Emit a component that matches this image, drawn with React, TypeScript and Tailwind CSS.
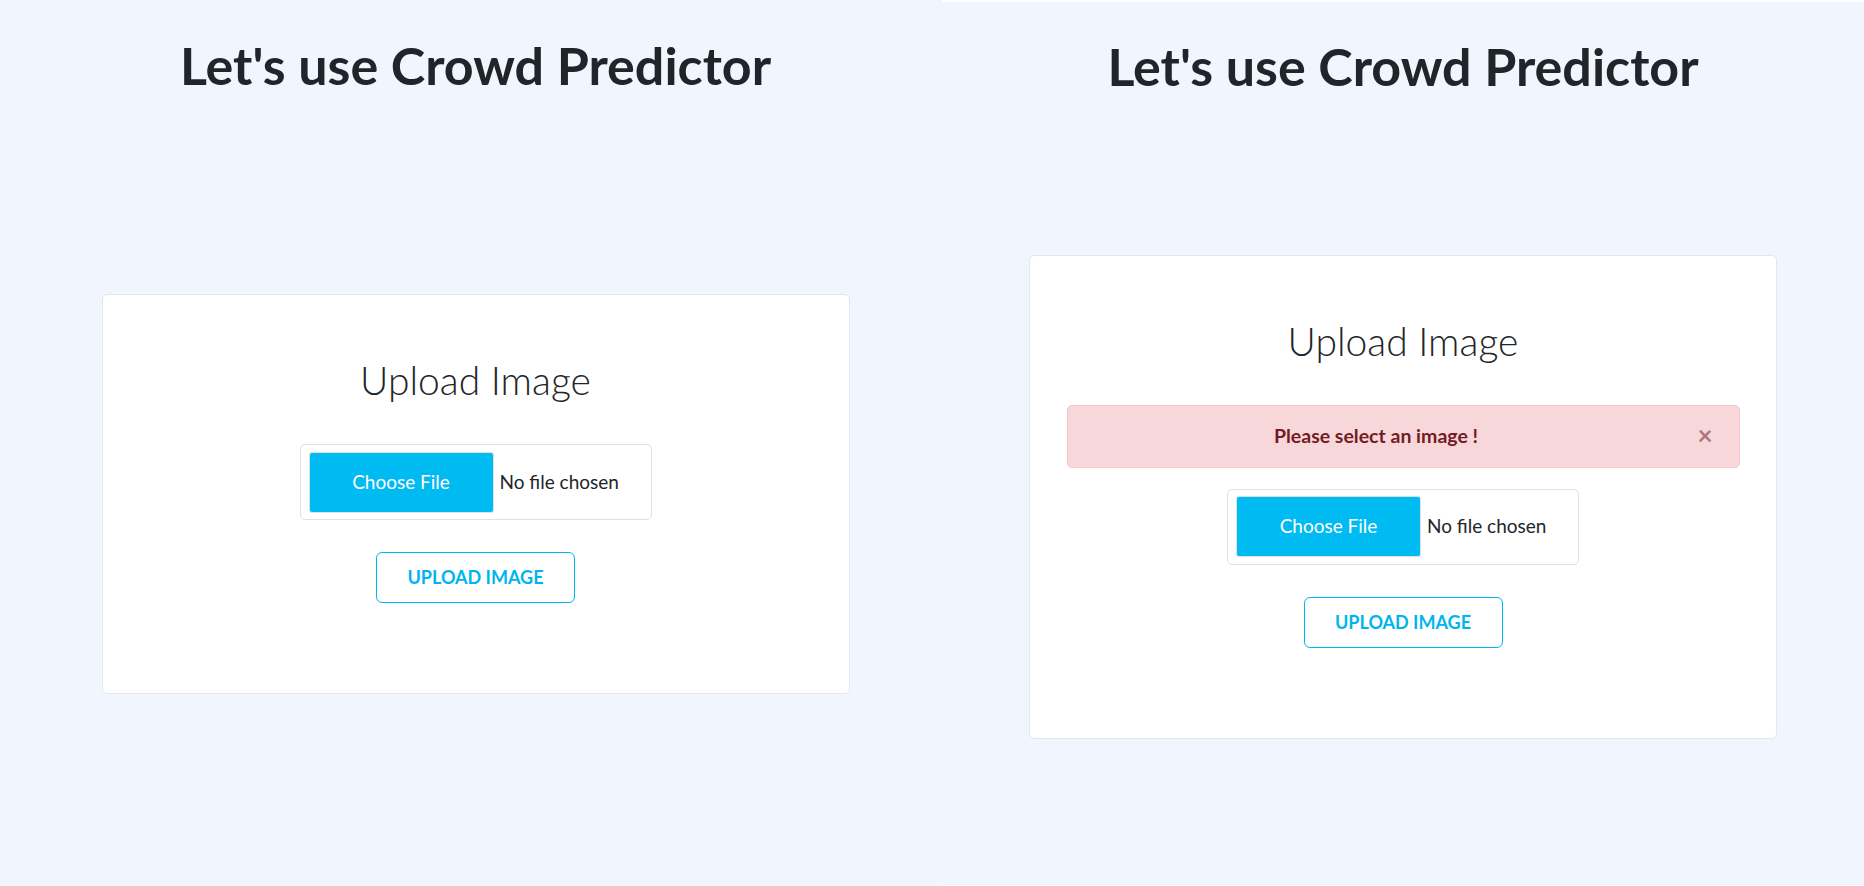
import React from "react";

const FileInput: React.FC = () => {
    return (
        <div className="w-[352px] h-[76px] border border-[#dee2e6] rounded-[5px] px-[8px] flex items-center">
            <div className="w-[185px] h-[61px] bg-[#00baf2] border border-[#d9e2e8] rounded-[3px] flex items-center justify-center text-white text-[19px]">
                Choose File
            </div>
            <span className="ml-[6px] text-[19px] text-[#212529]">
                No file chosen
            </span>
        </div>
    );
};

const Alert: React.FC = () => {
    return (
        <div className="relative w-[673px] h-[63px] mt-[40px] mb-[21px] bg-[#f8d7da] border border-[#f5c6cb] rounded-[5px] pl-5 pr-[74px] flex items-center justify-center text-[#721c24] font-bold text-[19.5px]">
            Please select an image !
            <span className="absolute right-[26px] top-[14px] text-[26px] leading-[30px] font-bold text-[#a8797e]">
                ×
            </span>
        </div>
    );
};

const Panel: React.FC<{ withAlert?: boolean }> = ({ withAlert }) => {
    return (
        <div
            className={`h-full flex flex-col items-center ${
                withAlert ? "flex-1 pl-[3px]" : "w-[939px] pl-[12px]"
            }`}
        >
            {withAlert && <div className="w-full h-[2px] bg-white shrink-0" />}
            <h1
                className={`${
                    withAlert ? "pt-[33px] mb-[11px]" : "pt-[34px] mb-[6px]"
                } text-[52px] leading-[62px] font-bold text-[#212529]`}
            >
                Let's use Crowd Predictor
            </h1>
            <div className="flex-1 w-full flex items-center justify-center">
                <div className="w-[748px] bg-white border border-[#e3e6ea] rounded-[5px] flex flex-col items-center pt-[61px] pb-[90px]">
                    <h2 className="text-[39px] leading-[48px] font-light text-[#212529]">
                        Upload Image
                    </h2>
                    {withAlert ? <Alert /> : <div className="h-[40px]" />}
                    <FileInput />
                    <button className="mt-[32px] w-[199px] h-[51px] border border-[#00b8f0] rounded-[6px] text-[#00b5ef] font-bold text-[18px] uppercase">
                        Upload Image
                    </button>
                </div>
            </div>
            {withAlert && <div className="w-full h-[1px] bg-white shrink-0" />}
        </div>
    );
};

export default function App() {
    return (
        <div
            className="w-[1864px] h-[886px] flex bg-[#f0f5fe] overflow-hidden"
            style={{ fontFamily: "Lato, 'Noto Sans', sans-serif" }}
        >
            <Panel />
            <Panel withAlert />
        </div>
    );
}
